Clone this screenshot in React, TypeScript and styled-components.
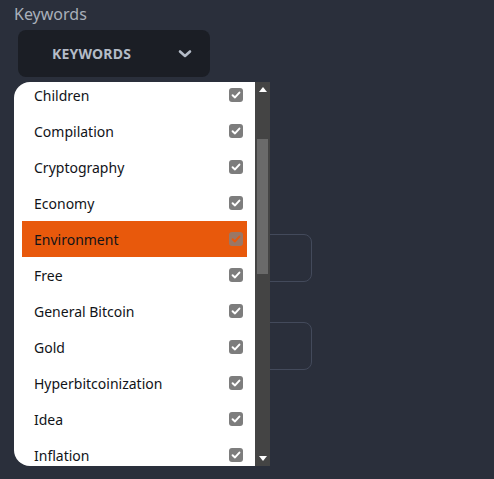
import React from "react";
import styled, { createGlobalStyle } from "styled-components";

const Global = createGlobalStyle`
  html, body { margin: 0; padding: 0; background: #2a2f3b; }
  body { font-family: "Noto Sans", "Open Sans", sans-serif; }
  * { box-sizing: border-box; }
`;

const Page = styled.div`
  position: relative;
  width: 494px;
  height: 479px;
  overflow: hidden;
  padding: 3px 0 0 14px;
`;

const Label = styled.div`
  font-size: 16px;
  color: #a9afba;
  line-height: 22px;
`;

const SelectButton = styled.div`
  margin: 5px 0 0 4px;
  width: 192px;
  height: 47px;
  border-radius: 8px;
  background: #1b1e25;
  display: flex;
  align-items: center;
  justify-content: space-between;
  padding: 0 18px 0 34px;
  color: #b4bbc7;
  font-weight: 700;
  font-size: 14px;
  letter-spacing: 0.2px;
`;

const Fields = styled.div`
  display: flex;
  flex-direction: column;
  gap: 40px;
  margin: 157px 0 0 4px;
`;

const FieldBox = styled.div`
  width: 294px;
  height: 48px;
  border: 1px solid #434a5b;
  border-radius: 8px;
`;

const Menu = styled.div`
  position: absolute;
  left: 14px;
  top: 82px;
  width: 256px;
  height: 384px;
  display: flex;
`;

const List = styled.div`
  flex: 1;
  background: #ffffff;
  border-radius: 16px 0 0 16px;
  overflow: hidden;
  padding: 0 8px;
`;

const Rows = styled.div`
  margin-top: -5px;
`;

const Row = styled.div<{ $active?: boolean }>`
  height: 36px;
  display: flex;
  align-items: center;
  justify-content: space-between;
  padding: 0 4px 0 12px;
  background: ${(p) => (p.$active ? "#e8590c" : "transparent")};
  color: #111318;
  font-size: 14px;
`;

const Check = styled.span<{ $active?: boolean }>`
  width: 14px;
  height: 14px;
  border-radius: 3px;
  background: ${(p) => (p.$active ? "#9a7766" : "#7d7d7d")};
  display: flex;
  align-items: center;
  justify-content: center;
  svg path { stroke: ${(p) => (p.$active ? "#e8590c" : "#ffffff")}; }
`;

const Scrollbar = styled.div`
  width: 15px;
  background: #444444;
  display: flex;
  flex-direction: column;
  align-items: center;
`;

const Arrow = styled.div`
  height: 15px;
  width: 15px;
  display: flex;
  align-items: center;
  justify-content: center;
`;

const Track = styled.div`
  flex: 1;
  width: 100%;
  display: flex;
  flex-direction: column;
  align-items: center;
  padding-top: 42px;
`;

const Thumb = styled.div`
  width: 11px;
  height: 135px;
  background: #6a6a6a;
`;

const items = [
  "Children",
  "Compilation",
  "Cryptography",
  "Economy",
  "Environment",
  "Free",
  "General Bitcoin",
  "Gold",
  "Hyperbitcoinization",
  "Idea",
  "Inflation",
];

const CheckIcon = () => (
  <svg width="10" height="10" viewBox="0 0 10 10">
    <path d="M1.6 5.2 L4 7.4 L8.4 2.6" fill="none" strokeWidth="2" strokeLinecap="round" strokeLinejoin="round" />
  </svg>
);

export default function App() {
  return (
    <Page>
      <Global />
      <Label>Keywords</Label>
      <SelectButton>
        <span>KEYWORDS</span>
        <svg width="14" height="10" viewBox="0 0 14 10">
          <path d="M2 2.5 L7 7 L12 2.5" fill="none" stroke="#b4bbc7" strokeWidth="2.6" strokeLinecap="round" strokeLinejoin="round" />
        </svg>
      </SelectButton>
      <Fields>
        <FieldBox />
        <FieldBox />
      </Fields>
      <Menu>
        <List>
          <Rows>
            {items.map((it) => (
              <Row key={it} $active={it === "Environment"}>
                <span>{it}</span>
                <Check $active={it === "Environment"}>
                  <CheckIcon />
                </Check>
              </Row>
            ))}
          </Rows>
        </List>
        <Scrollbar>
          <Arrow>
            <svg width="8" height="5" viewBox="0 0 8 5"><path d="M0 5 L4 0 L8 5 Z" fill="#ffffff" /></svg>
          </Arrow>
          <Track>
            <Thumb />
          </Track>
          <Arrow>
            <svg width="8" height="5" viewBox="0 0 8 5"><path d="M0 0 L4 5 L8 0 Z" fill="#ffffff" /></svg>
          </Arrow>
        </Scrollbar>
      </Menu>
    </Page>
  );
}
